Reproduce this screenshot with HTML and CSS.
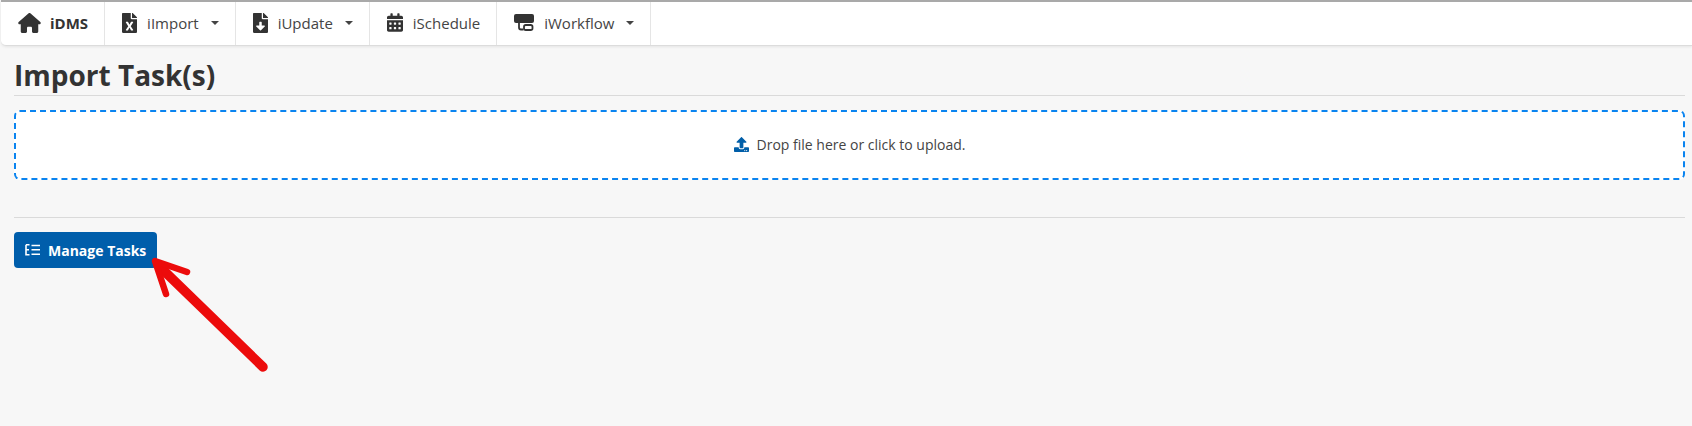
FILE: index.html
```html
<!DOCTYPE html>
<html lang="en">
<head>
<meta charset="utf-8">
<title>Import Task(s)</title>
<link rel="stylesheet" href="styles.css">
</head>
<body>
<nav class="nav">
  <a class="nav-item brand">
    <svg class="icon home" viewBox="0 0 576 512"><path d="M575.800 255.500c0 18-15 32.100-32 32.100h-32l.7 160.200c0 2.700-.2 5.400-.5 8.100V472c0 22.100-17.900 40-40 40H456c-1.100 0-2.200 0-3.300-.1-1.400.1-2.800.1-4.200.1H392c-22.100 0-40-17.900-40-40v-88c0-17.700-14.300-32-32-32h-64c-17.700 0-32 14.300-32 32v88c0 22.100-17.900 40-40 40h-56c-1.500 0-3-.1-4.500-.2-1.200.1-2.400.2-3.600.2H104c-22.100 0-40-17.900-40-40V360c0-.9 0-1.900.1-2.800v-69.600H32c-18 0-32-14-32-32.100 0-9 3-17 10-24L266.400 8c7-7 15-8 22-8s15 2 21 7l255.400 224.500c8 7 12 15 11 24z"/></svg>
    <span>iDMS</span>
  </a>
  <a class="nav-item">
    <svg class="icon file" viewBox="0 0 384 512"><path d="M224 136V0H24C10.700 0 0 10.700 0 24v464c0 13.300 10.700 24 24 24h336c13.300 0 24-10.700 24-24V160H248c-13.200 0-24-10.800-24-24zm60.100 106.500L224 336l60.100 93.500c5.100 8-.6 18.500-10.100 18.500h-34.900c-4.400 0-8.500-2.400-10.600-6.300C208.900 405.500 192 373 192 373c-6.400 14.800-10 20-36.600 68.800-2.100 3.900-6.100 6.300-10.500 6.300H110c-9.500 0-15.200-10.500-10.100-18.500l60.300-93.500-60.300-93.500c-5.200-8 .6-18.500 10.100-18.500h34.800c4.400 0 8.500 2.400 10.600 6.300 26.100 48.800 20 33.600 36.600 68.500 0 0 6.100-11.700 36.600-68.500 2.100-3.900 6.200-6.300 10.600-6.300H274c9.500-.1 15.200 10.400 10.100 18.400zM384 121.900v6.100H256V0h6.100c6.400 0 12.500 2.500 17 7l97.900 98c4.500 4.500 7 10.600 7 16.900z"/></svg>
    <span>iImport</span><i class="caret"></i>
  </a>
  <a class="nav-item">
    <svg class="icon file" viewBox="0 0 384 512"><path d="M224 136V0H24C10.700 0 0 10.700 0 24v464c0 13.300 10.700 24 24 24h336c13.300 0 24-10.700 24-24V160H248c-13.200 0-24-10.800-24-24zm76.450 211.360-96.420 95.700c-6.650 6.610-17.390 6.610-24.040 0l-96.420-95.700C73.420 337.290 80.540 320 94.820 320H160v-80c0-8.840 7.160-16 16-16h32c8.840 0 16 7.160 16 16v80h65.180c14.280 0 21.400 17.290 11.270 27.360zM377 105 279.100 7c-4.500-4.500-10.600-7-17-7H256v128h128v-6.100c0-6.300-2.500-12.400-7-16.900z"/></svg>
    <span>iUpdate</span><i class="caret"></i>
  </a>
  <a class="nav-item">
    <svg class="icon calendar" viewBox="0 0 448 512"><path d="M0 464c0 26.500 21.500 48 48 48h352c26.500 0 48-21.500 48-48V192H0v272zm320-196c0-6.600 5.400-12 12-12h40c6.600 0 12 5.400 12 12v40c0 6.600-5.400 12-12 12h-40c-6.600 0-12-5.400-12-12v-40zm0 128c0-6.600 5.400-12 12-12h40c6.600 0 12 5.400 12 12v40c0 6.600-5.400 12-12 12h-40c-6.600 0-12-5.400-12-12v-40zM192 268c0-6.600 5.400-12 12-12h40c6.600 0 12 5.400 12 12v40c0 6.600-5.400 12-12 12h-40c-6.600 0-12-5.400-12-12v-40zm0 128c0-6.600 5.400-12 12-12h40c6.600 0 12 5.400 12 12v40c0 6.600-5.400 12-12 12h-40c-6.600 0-12-5.400-12-12v-40zM64 268c0-6.600 5.400-12 12-12h40c6.600 0 12 5.400 12 12v40c0 6.600-5.400 12-12 12H76c-6.600 0-12-5.400-12-12v-40zm0 128c0-6.600 5.400-12 12-12h40c6.600 0 12 5.400 12 12v40c0 6.600-5.400 12-12 12H76c-6.600 0-12-5.400-12-12v-40zM400 64h-48V16c0-8.800-7.200-16-16-16h-32c-8.800 0-16 7.200-16 16v48H160V16c0-8.800-7.200-16-16-16h-32c-8.800 0-16 7.200-16 16v48H48C21.500 64 0 85.500 0 112v48h448v-48c0-26.500-21.500-48-48-48z"/></svg>
    <span>iSchedule</span>
  </a>
  <a class="nav-item">
    <svg class="icon workflow" viewBox="0 0 20 17"><rect x="0" y="0" width="20" height="9" rx="2"/><path class="wf-line" d="M5 9v4.500a2 2 0 0 0 2 2h2.500"/><rect class="wf-box" x="10" y="11" width="8.500" height="5" rx="1.800"/></svg>
    <span>iWorkflow</span><i class="caret"></i>
  </a>
</nav>
<main class="page">
  <h1 class="title">Import Task(s)</h1>
  <div class="dropzone">
    <svg class="upload" viewBox="0 0 512 512"><path d="M296 384h-80c-13.300 0-24-10.700-24-24V192h-87.700c-17.800 0-26.700-21.500-14.100-34.100L242.300 5.700c7.500-7.500 19.800-7.500 27.300 0l152.200 152.200c12.600 12.600 3.700 34.100-14.100 34.100H320v168c0 13.300-10.700 24-24 24zm216-8v112c0 13.300-10.700 24-24 24H24c-13.300 0-24-10.700-24-24V376c0-13.300 10.700-24 24-24h136v8c0 30.900 25.100 56 56 56h80c30.900 0 56-25.100 56-56v-8h136c13.300 0 24 10.700 24 24zm-124 88c0-11-9-20-20-20s-20 9-20 20 9 20 20 20 20-9 20-20zm64 0c0-11-9-20-20-20s-20 9-20 20 9 20 20 20 20-9 20-20z"/></svg>
    <span>Drop file here or click to upload.</span>
  </div>
  <hr class="rule">
  <button class="manage" type="button">
    <svg class="tasks" viewBox="0 0 15 12"><path d="M1 .8h3.500M1 .8v10h3.500M1 5.800h3M6.500 1.500h8.500M6.500 5.800h8.500M6.500 10.300h8.500"/></svg>
    <span>Manage Tasks</span>
  </button>
</main>
<svg class="arrow" viewBox="0 0 1692 426"><path class="shaft" d="M263 367 160 267"/><path class="head" d="M187 272 155 261 166 294"/></svg>
</body>
</html>
```
FILE: styles.css
```css
* { box-sizing: border-box; }
html, body { height: 100%; }
body {
  margin: 0;
  background: #f7f7f7;
  color: #333;
  font-family: "Open Sans", "Liberation Sans", sans-serif;
  font-size: 14px;
  overflow: hidden;
}
.nav {
  display: flex;
  height: 46px;
  background: #fff;
  border-top: 2px solid #a9a9a9;
  border-bottom: 1px solid #dcdcdc;
  border-radius: 0 0 0 5px;
  box-shadow: 0 1px 3px rgba(0, 0, 0, .08);
  margin-left: 1px;
}
.nav-item {
  display: flex;
  align-items: center;
  height: 100%;
  padding: 0 16px 2px 17px;
  border-right: 1px solid #e5e5e5;
  color: #444;
  font-size: 15px;
}
.brand { color: #333; font-weight: 700; font-size: 15px; }
.icon { fill: #333; flex: none; }
.home { width: 23px; height: 20px; margin-right: 9px; }
.file { width: 15px; height: 20px; margin-right: 10px; }
.calendar { width: 16px; height: 19px; margin-right: 10px; }
.workflow { width: 20px; height: 17px; margin-right: 10px; }
.wf-line { fill: none; stroke: #333; stroke-width: 1.800; }
.wf-box { fill: none; stroke: #333; stroke-width: 1.800; }
.caret {
  width: 0;
  height: 0;
  margin-left: 12px;
  border-top: 4px solid #444;
  border-left: 4px solid transparent;
  border-right: 4px solid transparent;
}
.page { padding: 0 7px 0 14px; }
.title {
  margin: 0;
  padding: 10px 0 1px;
  height: 50px;
  font-size: 28px;
  line-height: 38px;
  font-weight: 700;
  color: #333;
  border-bottom: 1px solid #dadada;
}
.dropzone {
  display: flex;
  align-items: center;
  justify-content: center;
  gap: 8px;
  height: 70px;
  margin-top: 14px;
  padding-bottom: 2px;
  background: #fff;
  border: 2px dashed #0a84f0;
  border-radius: 6px;
  font-size: 14px;
  color: #444;
}
.upload { width: 15px; height: 15px; fill: #005ea8; flex: none; }
.rule {
  margin: 37px 0 14px;
  border: 0;
  border-top: 1px solid #dadada;
}
.manage {
  display: flex;
  align-items: center;
  gap: 8px;
  width: 143px;
  height: 36px;
  padding: 0 11px;
  background: #005eab;
  border: 0;
  border-radius: 4px;
  color: #fff;
  font: 700 14px "Open Sans", "Liberation Sans", sans-serif;
  white-space: nowrap;
}
.tasks { width: 15px; height: 12px; fill: none; stroke: #fff; stroke-width: 1.600; flex: none; }
.arrow {
  position: absolute;
  left: 0;
  top: 0;
  width: 1692px;
  height: 426px;
  pointer-events: none;
}
.shaft { fill: none; stroke: #ec0b0b; stroke-width: 9.500; stroke-linecap: round; }
.head { fill: none; stroke: #ec0b0b; stroke-width: 6.500; stroke-linecap: round; stroke-linejoin: round; }
```
